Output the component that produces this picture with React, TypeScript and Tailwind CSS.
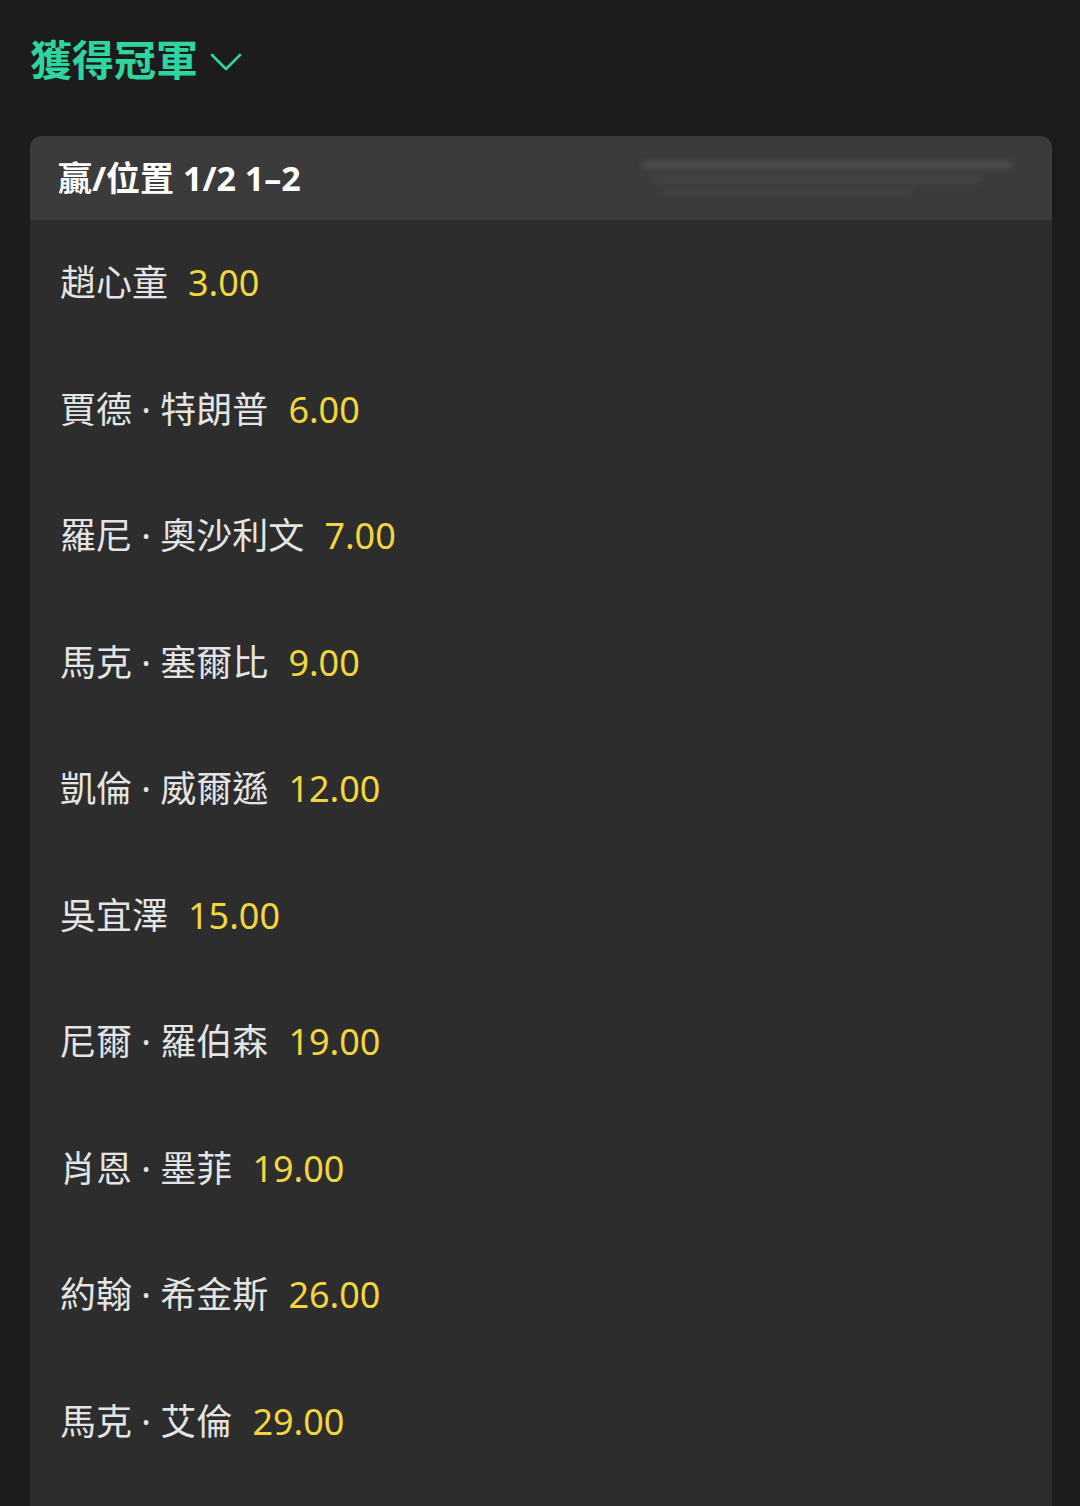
import React from "react";

const rows: { name: string; odds: string }[] = [
  { name: "趙心童", odds: "3.00" },
  { name: "賈德 · 特朗普", odds: "6.00" },
  { name: "羅尼 · 奧沙利文", odds: "7.00" },
  { name: "馬克 · 塞爾比", odds: "9.00" },
  { name: "凱倫 · 威爾遜", odds: "12.00" },
  { name: "吳宜澤", odds: "15.00" },
  { name: "尼爾 · 羅伯森", odds: "19.00" },
  { name: "肖恩 · 墨菲", odds: "19.00" },
  { name: "約翰 · 希金斯", odds: "26.00" },
  { name: "馬克 · 艾倫", odds: "29.00" },
];

export default function App() {
  return (
    <div
      className="w-[1080px] h-[1506px] overflow-hidden bg-[#1c1c1c] flex flex-col"
      style={{ fontFamily: '"Noto Sans", "Noto Sans CJK TC", sans-serif' }}
    >
      <div className="h-[136px] flex items-start pl-[30px] pt-[33px]">
        <div className="flex items-center gap-[12px]">
          <span className="text-[42px] leading-[54px] font-bold text-[#2fd59f]">獲得冠軍</span>
          <svg width="32" height="22" viewBox="0 0 32 22" className="mt-[4px]">
            <polyline points="2,4 16,18 30,4" fill="none" stroke="#2fd59f" strokeWidth="2.6" strokeLinecap="round" strokeLinejoin="round" />
          </svg>
        </div>
      </div>
      <div className="ml-[30px] w-[1022px] flex-1 rounded-t-[12px] bg-[#2d2d2d] flex flex-col overflow-hidden">
        <div className="h-[84px] bg-[#3b3b3b] flex items-center justify-between pl-[28px] pr-[30px]">
          <span className="text-[34px] font-bold text-white">贏/位置 1/2 1–2</span>
          <div className="w-[380px] h-[40px] flex flex-col justify-center gap-[6px] blur-[3px] opacity-40">
            <div className="h-[8px] w-[370px] bg-[#6a6a6a] rounded"></div>
            <div className="h-[8px] w-[330px] bg-[#555555] rounded ml-[10px]"></div>
            <div className="h-[6px] w-[250px] bg-[#555555] rounded ml-[20px]"></div>
          </div>
        </div>
        <div className="flex flex-col">
          {rows.map((r, i) => (
            <div key={i} className="h-[126.5px] flex items-center pl-[30px]">
              <span className="text-[36px] text-[#e4e4e4]">{r.name}</span>
              <span className="text-[36px] text-[#f2d640] ml-[20px]">{r.odds}</span>
            </div>
          ))}
        </div>
      </div>
    </div>
  );
}
